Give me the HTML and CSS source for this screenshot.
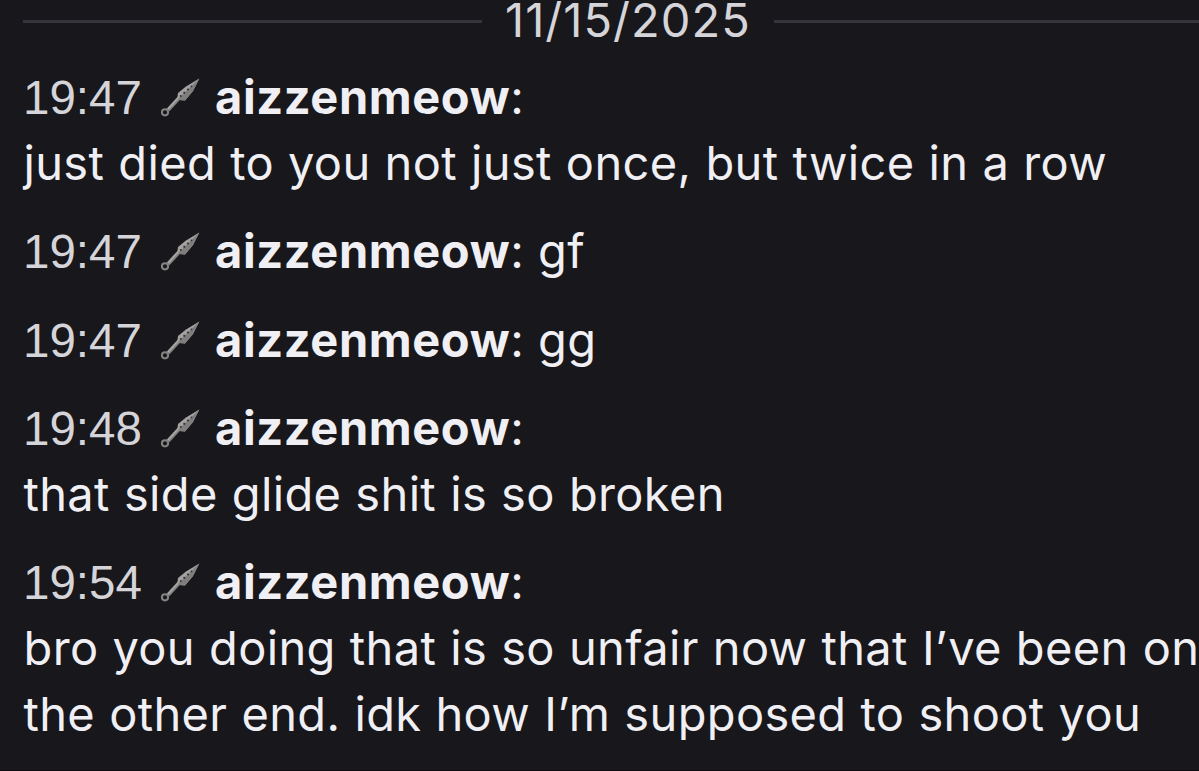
FILE: index.html
```html
<!DOCTYPE html>
<html lang="en">
<head>
    <meta charset="UTF-8">
    <meta name="viewport" content="width=device-width, initial-scale=1.0">
    <title>Whispers</title>
    <link rel="stylesheet" href="styles.css">
</head>
<body>
    <svg class="defs">
        <symbol id="kunai" viewBox="0 0 40 40">
            <path d="M8 33L19 21" stroke="#858483" stroke-width="4"/>
            <path d="M8 32L19 20" stroke="#aaa9a7" stroke-width="1.5"/>
            <circle cx="5" cy="35.3" r="3.1" fill="none" stroke="#858483" stroke-width="2"/>
            <path d="M39.3 1.5L26 9.5L18 16L17.3 21L19.5 23L25 23.5L33 14Z" fill="#a3a2a0"/>
            <path d="M39.3 1.5L18 22L19.5 23L25 23.5L33 14Z" fill="#7f7e7d"/>
            <g fill="#333235">
                <circle cx="20.8" cy="19" r="1"/>
                <circle cx="24.3" cy="15.8" r="1.1"/>
                <circle cx="28" cy="12.5" r="1.1"/>
                <circle cx="31.5" cy="9.4" r=".9"/>
            </g>
        </symbol>
    </svg>
    <div class="chat">
        <div class="date-divider"><span>11/15/2025</span></div>
        <div class="message">
            <div class="header">
                <span class="time">19:47</span>
                <svg class="badge"><use href="#kunai"/></svg>
                <span><b>aizzenmeow</b>:</span>
            </div>
            <p>just died to you not just once, but twice in a row</p>
        </div>
        <div class="message">
            <div class="header">
                <span class="time">19:47</span>
                <svg class="badge"><use href="#kunai"/></svg>
                <span><b>aizzenmeow</b>: gf</span>
            </div>
        </div>
        <div class="message">
            <div class="header">
                <span class="time">19:47</span>
                <svg class="badge"><use href="#kunai"/></svg>
                <span><b>aizzenmeow</b>: gg</span>
            </div>
        </div>
        <div class="message">
            <div class="header">
                <span class="time">19:48</span>
                <svg class="badge"><use href="#kunai"/></svg>
                <span><b>aizzenmeow</b>:</span>
            </div>
            <p>that side glide shit is so broken</p>
        </div>
        <div class="message">
            <div class="header">
                <span class="time">19:54</span>
                <svg class="badge"><use href="#kunai"/></svg>
                <span><b>aizzenmeow</b>:</span>
            </div>
            <p>bro you doing that is so unfair now that I’ve been on<br>the other end. idk how I’m supposed to shoot you</p>
        </div>
    </div>
</body>
</html>
```

FILE: styles.css
```css
body {
    box-sizing: border-box;
    margin: 0;
    height: 771px;
    overflow: hidden;
    border-bottom: 1px solid #0c0a0e;
    background-color: #18171c;
    color: #f0eff4;
    font-family: Inter, sans-serif;
    font-size: 47px;
    line-height: 65.8px;
    letter-spacing: 0.47px;
}

.defs {
    display: none;
}

.chat {
    padding-left: 23px;
}

.date-divider {
    display: flex;
    align-items: center;
    height: 42px;
    margin-bottom: 22px;
    color: #d5d4d9;
    line-height: 40px;
    letter-spacing: 1.05px;
}

.date-divider span {
    margin: 0 23px;
    padding-bottom: 2px;
}

.date-divider::before,
.date-divider::after {
    content: "";
    height: 3px;
    background-color: #35343a;
}

.date-divider::before {
    width: 459px;
}

.date-divider::after {
    flex: 1;
}

.message {
    margin-bottom: 22.65px;
    white-space: nowrap;
}

.message p {
    margin: 0;
    padding-left: 0.5px;
    letter-spacing: 0.35px;
    word-spacing: 0.5px;
}

.header {
    display: flex;
    align-items: center;
}

.time {
    width: 137px;
    padding-top: 1px;
    margin-bottom: -1px;
    color: #d5d4d9;
    font-family: "Liberation Sans", sans-serif;
    font-size: 47.5px;
    letter-spacing: 0;
}

.badge {
    width: 40px;
    height: 40px;
    margin-right: 15px;
}

b {
    font-weight: 700;
    letter-spacing: 0.6px;
}
```
